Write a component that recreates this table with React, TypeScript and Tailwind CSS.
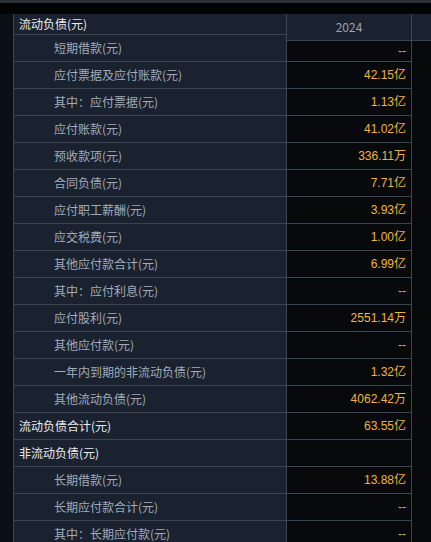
const rows: { label: string; value: string; top?: boolean }[] = [
  { label: "短期借款(元)", value: "--" },
  { label: "应付票据及应付账款(元)", value: "42.15亿" },
  { label: "其中：应付票据(元)", value: "1.13亿" },
  { label: "应付账款(元)", value: "41.02亿" },
  { label: "预收款项(元)", value: "336.11万" },
  { label: "合同负债(元)", value: "7.71亿" },
  { label: "应付职工薪酬(元)", value: "3.93亿" },
  { label: "应交税费(元)", value: "1.00亿" },
  { label: "其他应付款合计(元)", value: "6.99亿" },
  { label: "其中：应付利息(元)", value: "--" },
  { label: "应付股利(元)", value: "2551.14万" },
  { label: "其他应付款(元)", value: "--" },
  { label: "一年内到期的非流动负债(元)", value: "1.32亿" },
  { label: "其他流动负债(元)", value: "4062.42万" },
  { label: "流动负债合计(元)", value: "63.55亿", top: true },
  { label: "非流动负债(元)", value: "", top: true },
  { label: "长期借款(元)", value: "13.88亿" },
  { label: "长期应付款合计(元)", value: "--" },
  { label: "其中：长期应付款(元)", value: "--" },
];

export default function App() {
  return (
    <div
      className="w-[431px] h-[542px] overflow-hidden bg-black text-[12px] flex flex-col"
      style={{ fontFamily: '"Noto Sans CJK SC", "Liberation Sans", sans-serif' }}
    >
      {/* top strip */}
      <div className="h-[3px] bg-[#2a2f36] shrink-0" />
      <div className="h-[11px] bg-[#020304] shrink-0" />

      <div className="flex flex-1 min-h-0">
        {/* left gutter */}
        <div className="w-[14px] shrink-0 bg-[#0b1016] border-r border-[#3a4656]" />

        {/* labels */}
        <div className="w-[272px] shrink-0 flex flex-col bg-[#1a2230]">
          <div className="h-[21px] shrink-0 border-b border-[#3b4655] pl-[5px] flex items-center text-[#e8ebee]">
            流动负债(元)
          </div>
          {rows.map((r) => (
            <div
              key={r.label}
              className={`h-[27px] shrink-0 border-b border-[#3b4655] flex items-center ${
                r.top ? "pl-[5px] text-[#e8ebee]" : "pl-[40px] text-[#a3abb5]"
              }`}
            >
              {r.label}
            </div>
          ))}
        </div>

        {/* values */}
        <div className="w-[126px] shrink-0 flex flex-col bg-[#07090b] border-l border-r border-[#3b4655]">
          <div className="h-[27px] shrink-0 bg-[#1a2230] border-b border-[#3b4655] flex items-center justify-center text-[#9aa2ac]">
            2024
          </div>
          {rows.map((r, i) => (
            <div
              key={r.label}
              className={`${i === 0 ? "h-[21px]" : "h-[27px]"} shrink-0 border-b border-[#3b4655] flex items-center justify-end pr-[5px] text-[#f1b43f]`}
              style={{ fontFamily: '"Liberation Sans", "Noto Sans CJK SC", sans-serif' }}
            >
              {r.value}
            </div>
          ))}
        </div>

        {/* next column */}
        <div className="flex-1 flex flex-col bg-[#07090b]">
          <div className="h-[27px] shrink-0 bg-[#1a2230] border-b border-[#3b4655]" />
        </div>
      </div>
    </div>
  );
}
